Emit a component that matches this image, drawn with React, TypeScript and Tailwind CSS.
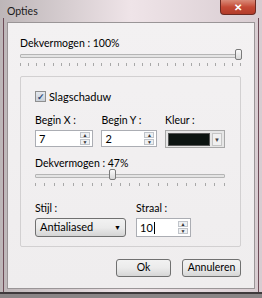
import { ReactNode } from 'react';

const font = { fontFamily: 'Lato, "Open Sans", Arial, sans-serif' };

function Slider({ pos, ticks }: { pos: number; ticks: number }) {
  return (
    <div className="relative pt-[3px]">
      <div className="h-[4px] border border-[#b5b5b5] bg-[#e4e4e4] rounded-[1px]" />
      <div
        className="absolute top-[-2px] w-[7px] h-[11px] border border-[#7a7a7a] rounded-[2px] bg-gradient-to-b from-[#fafafa] to-[#d8d8d8]"
        style={{ left: `calc(${pos}% - 4px)` }}
      />
      <div className="flex justify-between mt-[5px] h-[3px]">
        {Array.from({ length: ticks }).map((_, i) => (
          <div key={i} className="w-px h-[3px] bg-[#a8a8a8]" />
        ))}
      </div>
    </div>
  );
}

function Spinner() {
  return (
    <div className="flex flex-col gap-px">
      <div className="w-[10px] h-[6px] border border-[#c0c4ca] bg-[#eef0f2] flex items-center justify-center text-[5px] leading-none text-[#333]">▲</div>
      <div className="w-[10px] h-[6px] border border-[#c0c4ca] bg-[#eef0f2] flex items-center justify-center text-[5px] leading-none text-[#333]">▼</div>
    </div>
  );
}

function SpinBox({ value, w, caret }: { value: string; w: string; caret?: boolean }) {
  return (
    <div className={`${w} border border-[#abadb3] bg-white flex items-center justify-between pl-[3px] pr-[2px]`}>
      <span className="text-[11px] text-black leading-none flex items-center">
        {value}
        {caret && <span className="inline-block w-px h-[12px] bg-black ml-px" />}
      </span>
      <Spinner />
    </div>
  );
}

function Label({ children }: { children: ReactNode }) {
  return <div className="text-[10.5px] leading-[13px] text-black mb-[3px]">{children}</div>;
}

function Button({ children, w }: { children: ReactNode; w: string }) {
  return (
    <div className={`${w} h-[18px] border border-[#707070] rounded-[3px] bg-gradient-to-b from-[#f2f2f2] via-[#ebebeb] to-[#d6d6d6] flex items-center justify-center text-[10.5px] text-black`}>
      {children}
    </div>
  );
}

export default function App() {
  return (
    <div
      className="w-[262px] h-[298px] overflow-hidden bg-gradient-to-r from-[#bdb6b8] via-[#efe4e8] to-[#d8ccd1] flex flex-col relative"
      style={font}
    >
      {/* frame edges */}
      <div className="absolute left-[3px] top-[18px] bottom-[6px] w-px bg-[#6d4b57]" />
      <div className="absolute right-[3px] top-[18px] bottom-[6px] w-px bg-[#6d4b57]" />
      <div className="absolute left-0 right-0 bottom-[4px] h-[2px] bg-[#3f3a3c]" />
      <div className="absolute left-0 right-0 bottom-0 h-[4px] bg-[#8a8586]" />

      <div className="h-[22px] flex items-start justify-between pl-[7px] pr-[6px]">
        <span className="text-[10.5px] leading-[12px] mt-[5px] text-[#1a1a1a]">Opties</span>
        <div className="w-[36px] h-[15px] border border-[#6b2a22] border-t-0 rounded-b-[4px] bg-gradient-to-b from-[#d98a78] via-[#c44a36] to-[#b23c2a] flex items-center justify-center text-white text-[10px] font-bold leading-none">
          ✕
        </div>
      </div>

      <div className="flex-1 mx-[7px] mb-[9px] border border-[#9a9597] bg-gradient-to-b from-[#f3f1f2] to-[#efedee] flex flex-col pl-[12px] pr-[13px] pt-[14px]">
        <div className="text-[10.5px] leading-[13px] text-black">Dekvermogen : 100%</div>
        <div className="mt-[1px]">
          <Slider pos={99} ticks={28} />
        </div>

        <div className="mt-[10px] h-[171px] border border-[#d2d0d1] rounded-[2px] flex flex-col pl-[14px] pr-[15px] pt-[13px]">
          <div className="flex items-center gap-[3px]">
            <div className="w-[11px] h-[11px] border border-[#8f8f8f] bg-gradient-to-b from-[#e4e8ee] to-[#c9d0d9] flex items-center justify-center text-[9px] leading-none text-[#2b4a7a] font-bold">✓</div>
            <span className="text-[11px] leading-[13px] text-black">Slagschaduw</span>
          </div>

          <div className="flex mt-[11px]">
            <div className="w-[67px]">
              <Label>Begin X :</Label>
              <SpinBox value="7" w="w-[58px] h-[17px]" />
            </div>
            <div className="w-[64px]">
              <Label>Begin Y :</Label>
              <SpinBox value="2" w="w-[56px] h-[17px]" />
            </div>
            <div>
              <Label>Kleur :</Label>
              <div className="w-[60px] h-[18px] border border-[#a7a7a7] bg-[#e6e6e6] flex items-center pl-[2px] pr-[2px] gap-[2px]">
                <div className="w-[42px] h-[13px] bg-[#0c1411] border border-[#555]" />
                <div className="flex-1 h-[13px] border border-[#c5c5c5] bg-[#f0f0f0] flex items-center justify-center text-[6px] text-[#444]">▼</div>
              </div>
            </div>
          </div>

          <div className="mt-[9px] text-[10.5px] leading-[13px] text-black">Dekvermogen : 47%</div>
          <div className="mt-[1px] w-[190px]">
            <Slider pos={41} ticks={21} />
          </div>

          <div className="flex mt-[16px]">
            <div className="w-[101px]">
              <Label>Stijl :</Label>
              <div className="w-[91px] h-[19px] border border-[#707070] rounded-[3px] bg-gradient-to-b from-[#f2f2f2] via-[#ebebeb] to-[#d4d4d4] flex items-center justify-between pl-[4px] pr-[4px] text-[11px] text-black">
                <span>Antialiased</span>
                <span className="text-[7px]">▼</span>
              </div>
            </div>
            <div>
              <Label>Straal :</Label>
              <SpinBox value="10" w="w-[55px] h-[19px]" caret />
            </div>
          </div>
        </div>

        <div className="flex justify-end gap-[11px] mt-[12px]">
          <Button w="w-[55px]">Ok</Button>
          <Button w="w-[59px]">Annuleren</Button>
        </div>
      </div>
    </div>
  );
}
